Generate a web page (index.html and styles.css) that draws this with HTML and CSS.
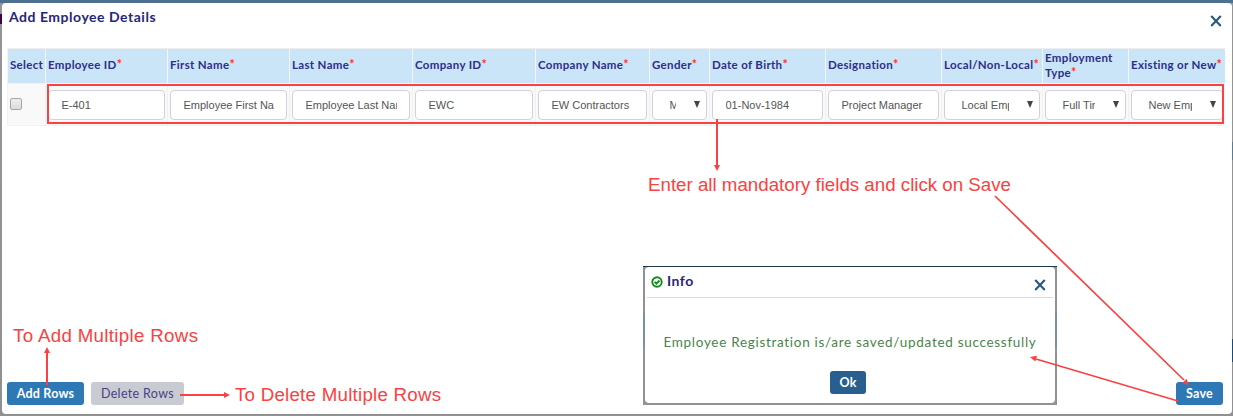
FILE: index.html
```html
<!DOCTYPE html>
<html lang="en">
<head>
<meta charset="utf-8">
<title>Add Employee Details</title>
<link rel="stylesheet" href="styles.css">
</head>
<body>
<div class="backdrop">
  <i class="sliver plum"></i><i class="sliver steel"></i><i class="sliver navy"></i>
  <main class="dialog">
    <header class="dialog-head">
      <h1>Add Employee Details</h1>
      <svg class="close" width="12" height="12" viewBox="0 0 12 12"><path d="M1.2 1 10.8 11M10.8 1 1.2 11"/></svg>
    </header>
    <section class="table">
      <div class="row head">
        <div class="cell">Select</div>
        <div class="cell"><span>Employee ID<b>*</b></span></div>
        <div class="cell"><span>First Name<b>*</b></span></div>
        <div class="cell"><span>Last Name<b>*</b></span></div>
        <div class="cell"><span>Company ID<b>*</b></span></div>
        <div class="cell"><span>Company Name<b>*</b></span></div>
        <div class="cell"><span>Gender<b>*</b></span></div>
        <div class="cell"><span>Date of Birth<b>*</b></span></div>
        <div class="cell"><span>Designation<b>*</b></span></div>
        <div class="cell"><span>Local/Non-Local<b>*</b></span></div>
        <div class="cell"><span>Employment<br>Type<b>*</b></span></div>
        <div class="cell"><span>Existing or New<b>*</b></span></div>
      </div>
      <div class="row body">
        <div class="cell"><span class="check"></span></div>
        <div class="cell"><div class="field"><span>E-401</span></div></div>
        <div class="cell"><div class="field"><span>Employee First Na</span></div></div>
        <div class="cell"><div class="field"><span>Employee Last Name</span></div></div>
        <div class="cell"><div class="field"><span>EWC</span></div></div>
        <div class="cell"><div class="field"><span>EW Contractors</span></div></div>
        <div class="cell"><div class="field select"><span>Male</span><i class="arrow"></i></div></div>
        <div class="cell"><div class="field"><span>01-Nov-1984</span></div></div>
        <div class="cell"><div class="field"><span>Project Manager</span></div></div>
        <div class="cell"><div class="field select"><span>Local Employee</span><i class="arrow"></i></div></div>
        <div class="cell"><div class="field select"><span>Full Time</span><i class="arrow"></i></div></div>
        <div class="cell"><div class="field select"><span>New Employee</span><i class="arrow"></i></div></div>
      </div>
    </section>
    <footer class="actions">
      <button class="btn add">Add Rows</button>
      <button class="btn delete">Delete Rows</button>
      <button class="btn save">Save</button>
    </footer>
  </main>
  <div class="info-shell">
    <section class="info">
      <header class="info-head">
        <svg class="tick" width="12" height="12" viewBox="0 0 12 12"><circle cx="6" cy="6" r="4.700"/><path d="M3.600 5.800 5.400 7.600 8.500 4.500"/></svg>
        <h2>Info</h2>
        <svg class="close" width="12" height="12" viewBox="0 0 12 12"><path d="M1.200 1 10.800 11M10.800 1 1.200 11"/></svg>
      </header>
      <p>Employee Registration is/are saved/updated successfully</p>
      <button class="btn ok">Ok</button>
    </section>
  </div>
  <svg class="notes" width="1233" height="418" viewBox="0 0 1233 418">
    <rect class="line" x="48" y="85" width="1175" height="38"/>
    <path class="line" d="M717 119V167M47 385V353M180 395H224"/>
    <path class="line slant" d="M995 196 1184 380M1178 401 1036 359"/>
    <path class="tip" d="M714 165h6l-3 6zM44 353h6l-3-6zM224 392v6l6-3zM1189 385l-6.500-2 4-4.200zM1030 357l7-1.200-1.700 5.700z"/>
    <text x="648" y="191" textLength="363">Enter all mandatory fields and click on Save</text>
    <text x="13" y="342" textLength="185">To Add Multiple Rows</text>
    <text x="235" y="401" textLength="206">To Delete Multiple Rows</text>
  </svg>
</div>
</body>
</html>
```
FILE: styles.css
```css
* { box-sizing: border-box; }
body { margin: 0; font-family: Lato, sans-serif; }
.backdrop {
  position: relative;
  width: 1233px;
  height: 418px;
  padding: 3px 1px 3px 2px;
  background: linear-gradient(#4c708e 3px, #959595 3px, #909090 416px, #fff 416px);
  overflow: hidden;
}
.sliver { position: absolute; }
.plum { left: 0; top: 14px; width: 2px; height: 10px; background: #420044; }
.steel { left: 1232px; top: 142px; width: 1px; height: 18px; background: #5c7b91; }
.navy { left: 1232px; top: 339px; width: 1px; height: 23px; background: #174a77; }
.dialog {
  display: flex;
  flex-direction: column;
  width: 1230px;
  height: 411px;
  padding: 0 5px;
  background: #fff;
  border-radius: 4px;
}
.dialog-head { display: flex; justify-content: space-between; height: 45px; padding: 5px 5px 0 2px; }
h1, h2 { margin: 0; color: #262679; font-weight: 700; }
h1 { font-size: 14px; line-height: 18px; letter-spacing: .52px; }
.close { fill: none; stroke: #2b5878; stroke-width: 2.1; }
.dialog-head .close { margin-top: 7px; }
.table { width: 1218px; border-top: 1px solid #eee; }
.row { display: grid; grid-template-columns: 38px 122px 122px 123px 123px 114px 60px 116px 116px 101px 86px 97px; }
.head { height: 34px; background: #cae5f8; }
.cell { display: flex; align-items: center; min-width: 0; border-left: 1px solid #f3f6f8; padding: 0 2px; }
.head .cell {
  color: #2e2e88;
  font-size: 11.500px;
  font-weight: 700;
  line-height: 15px;
  letter-spacing: .33px;
  white-space: nowrap;
  padding: 0 0 3px 2px;
}
.head b { color: #f33; font-size: 12.500px; line-height: 1px; font-weight: 700; letter-spacing: 0; }
.body { height: 43px; border-top: 1px solid #f2f2f2; border-bottom: 1px solid #f2f2f2; background: #f9f9f9; }
.body .cell { border-color: #f1f1f1; padding-bottom: 0; }
.check {
  width: 12px;
  height: 12px;
  margin: 0 0 2px;
  border: 1px solid #a6a6a6;
  border-radius: 2px;
  background: linear-gradient(#eee, #dcdcdc);
}
.field {
  display: flex;
  align-items: center;
  width: 100%;
  height: 30px;
  padding: 0 12px 0 12.500px;
  border: 1px solid #cdd2dc;
  border-radius: 4px;
  background: #fff;
  color: #555;
  font: 11px "Liberation Sans", Arial, sans-serif;
}
.field span { flex: 1; overflow: hidden; white-space: nowrap; }
.select { padding: 0 6px 0 16.500px; }
.select span { margin-right: 18px; }
.arrow { width: 6px; height: 7px; background: #444; clip-path: polygon(0 0, 100% 0, 50% 100%); }
.actions { display: flex; margin-top: auto; padding: 0 4px 9px 0; }
.btn {
  height: 23px;
  padding: 0;
  border: 0;
  border-radius: 3px;
  background: #2e79b5;
  color: #fff;
  font: 700 12.500px Lato, sans-serif;
  letter-spacing: .2px;
}
.add { width: 77px; }
.delete { width: 93px; margin-left: 7px; background: #c8cbd1; color: #484189; font-weight: 400; letter-spacing: .35px; }
.save { width: 47px; margin-left: auto; }
.info-shell {
  position: absolute;
  left: 643px;
  top: 266px;
  width: 414px;
  height: 139px;
  padding: 0 2px 2px;
  border-top: 1px solid #24384b;
  background: linear-gradient(#929292 46px, #7890a5 46px 80px, #929292 80px);
}
.info { display: flex; flex-direction: column; align-items: center; height: 136px; padding: 0 2px; border-radius: 4px; background: #fff; }
.info-head { display: flex; width: 100%; height: 31px; padding: 5px 7px 0 4px; border-bottom: 1px solid #d9d9d9; }
.tick { margin-top: 4px; fill: none; stroke: #118a1c; stroke-width: 1.900; }
h2 { margin-left: 4px; font-size: 14px; line-height: 18px; letter-spacing: .5px; }
.info-head .close { margin: 7px 0 0 auto; }
.info p { margin: 35px 0 0; color: #4b834d; font-size: 13.500px; line-height: 18px; letter-spacing: .7px; white-space: nowrap; }
.ok { width: 36px; margin: 20px 4px 0 0; background: #295f8f; }
.notes { position: absolute; left: 0; top: 0; }
.line { fill: none; stroke: #fb4141; stroke-width: 2; }
.slant { stroke-width: 1.700; }
.tip { fill: #fb4141; }
.notes text { fill: #fb4141; font: 18.700px "Liberation Sans", Arial, sans-serif; }
```
